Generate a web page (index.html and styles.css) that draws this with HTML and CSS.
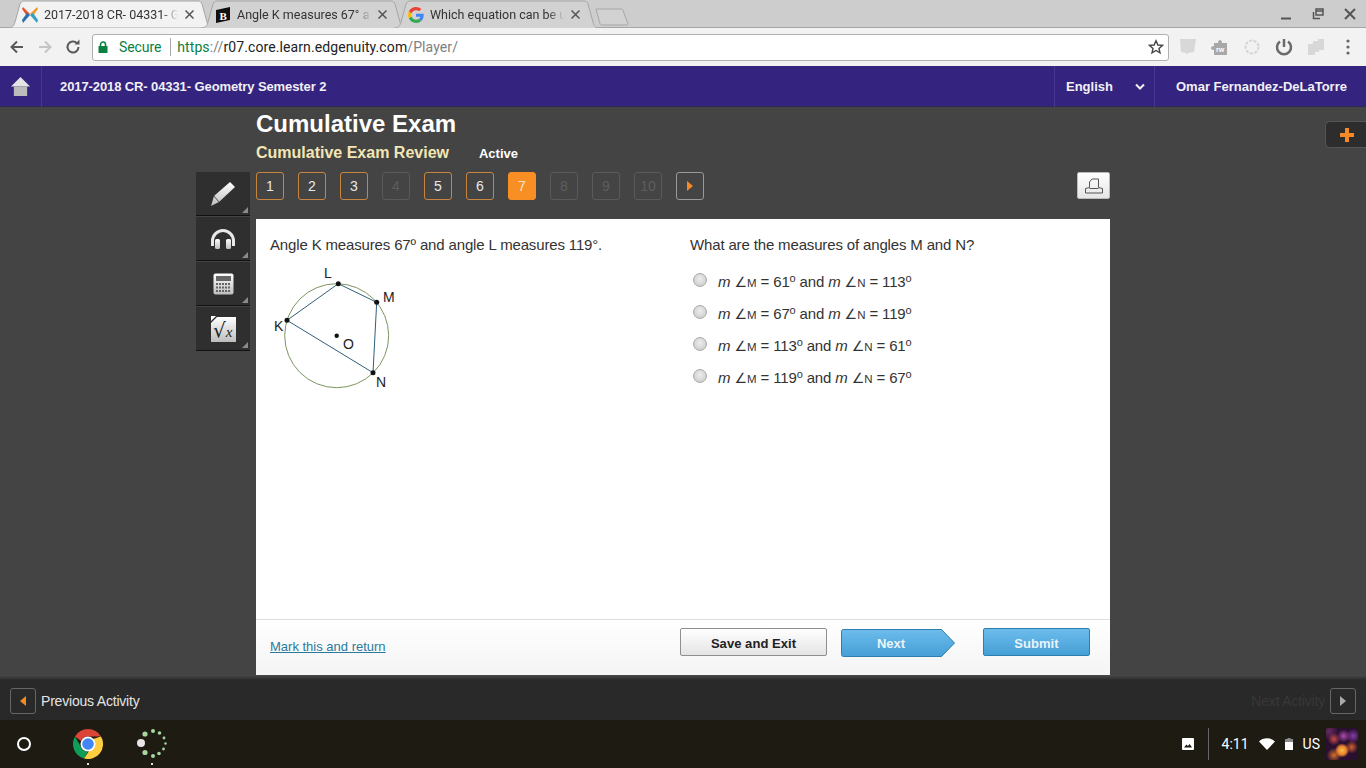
FILE: index.html
```html
<!DOCTYPE html>
<html lang="en">
<head>
<meta charset="utf-8">
<title>Cumulative Exam</title>
<link rel="stylesheet" href="styles.css">
</head>
<body>
<header class="tabstrip">
  <div class="tab tab-active">
    <svg class="tab-shape" width="204" height="28" viewBox="0 0 204 28"><path class="shape-active" d="M0 28 C4 28 6 26 7 22 L12 4 C13 2 14 1 16 1 L190 1 C192 1 193 2 194 4 L199 22 C200 26 202 28 204 28 Z"/></svg>
    <svg class="favicon" width="18" height="18" viewBox="0 0 18 18"><path d="M2 1 L9 8 L6 10 L1 3 Z" fill="#e2552a"/><path d="M16 1 L9 8 L12 10 L17 3 Z" fill="#f09a2d"/><path d="M2 17 L9 9 L6 7 L1 14 Z" fill="#2a6fb0"/><path d="M16 17 L9 9 L12 7 L17 14 Z" fill="#35a0c4"/></svg>
    <span class="tab-title">2017-2018 CR- 04331- G</span>
    <svg class="tab-close" width="9" height="9" viewBox="0 0 9 9"><path d="M0.500 0.500 L8.500 8.500 M8.500 0.500 L0.500 8.500"/></svg>
  </div>
  <div class="tab">
    <svg class="tab-shape" width="204" height="28" viewBox="0 0 204 28"><path class="shape-idle" d="M0 28 C4 28 6 26 7 22 L12 4 C13 2 14 1 16 1 L190 1 C192 1 193 2 194 4 L199 22 C200 26 202 28 204 28"/></svg>
    <svg class="favicon favicon-b" width="16" height="16" viewBox="0 0 16 16"><path d="M1 3 L15 0 L15 13 L1 16 Z" fill="#111"/><text x="4.500" y="12.500" class="b-letter">B</text></svg>
    <span class="tab-title">Angle K measures 67° a</span>
    <svg class="tab-close" width="9" height="9" viewBox="0 0 9 9"><path d="M0.500 0.500 L8.500 8.500 M8.500 0.500 L0.500 8.500"/></svg>
  </div>
  <div class="tab">
    <svg class="tab-shape" width="204" height="28" viewBox="0 0 204 28"><path class="shape-idle" d="M0 28 C4 28 6 26 7 22 L12 4 C13 2 14 1 16 1 L190 1 C192 1 193 2 194 4 L199 22 C200 26 202 28 204 28"/></svg>
    <svg class="favicon favicon-g" width="16" height="16" viewBox="0 0 48 48"><path fill="#ea4335" d="M24 9.500c3.500 0 6.700 1.200 9.200 3.600l6.900-6.900C35.900 2.400 30.500 0 24 0 14.600 0 6.500 5.400 2.600 13.200l8 6.200C12.400 13.700 17.700 9.500 24 9.500z"/><path fill="#4285f4" d="M47 24.500c0-1.600-.1-3.100-.4-4.500H24v9h12.900c-.6 3-2.300 5.500-4.800 7.200l7.700 6c4.500-4.200 7.200-10.300 7.200-17.700z"/><path fill="#fbbc05" d="M10.600 28.600C10.100 27.100 9.800 25.600 9.800 24s.3-3.100.8-4.600l-8-6.200C.9 16.500 0 20.100 0 24s.9 7.500 2.600 10.800l8-6.200z"/><path fill="#34a853" d="M24 48c6.500 0 11.900-2.100 15.900-5.800l-7.700-6c-2.200 1.500-4.900 2.300-8.200 2.300-6.300 0-11.600-4.200-13.400-9.900l-8 6.200C6.500 42.600 14.600 48 24 48z"/></svg>
    <span class="tab-title">Which equation can be u</span>
    <svg class="tab-close" width="9" height="9" viewBox="0 0 9 9"><path d="M0.500 0.500 L8.500 8.500 M8.500 0.500 L0.500 8.500"/></svg>
  </div>
  <svg class="newtab" width="34" height="18" viewBox="0 0 34 18"><path d="M1 1 L26 1 C27 1 27.500 1.500 28 2.500 L33 16 C33 17 32 17 31 17 L7 17 C6 17 5.500 16.500 5 15.500 Z"/></svg>
  <div class="winctl">
    <svg width="14" height="14" viewBox="0 0 14 14"><path class="win-stroke" d="M2 11.500 H12"/></svg>
    <svg width="14" height="14" viewBox="0 0 14 14"><path class="win-thin" d="M5 2 H12 V8 H5 Z M5 4 H12 M2.500 5 V11.500 H9"/></svg>
    <svg width="14" height="14" viewBox="0 0 14 14"><path class="win-stroke" d="M2 2 L12 12 M12 2 L2 12"/></svg>
  </div>
</header>

<nav class="toolbar">
  <svg class="tb-icon" width="16" height="16" viewBox="0 0 16 16"><path class="ic-dark" d="M14 8 H3 M8 2.500 L2.500 8 L8 13.500"/></svg>
  <svg class="tb-icon" width="16" height="16" viewBox="0 0 16 16"><path class="ic-faint" d="M2 8 H13 M8 2.500 L13.500 8 L8 13.500"/></svg>
  <svg class="tb-icon" width="16" height="16" viewBox="0 0 16 16"><path class="ic-dark" d="M13.500 8 A5.500 5.500 0 1 1 11.800 4"/><path class="ic-fill" d="M9.500 5.500 H14.500 V0.500 Z"/></svg>
  <div class="omnibox">
    <svg class="lock" width="10" height="12" viewBox="0 0 10 12"><path class="lock-body" d="M0.500 5 H9.500 V12 H0.500 Z"/><path class="lock-arc" d="M2.500 5 V3.500 A2.500 2.500 0 0 1 7.500 3.500 V5"/></svg>
    <span class="secure">Secure</span>
    <span class="omni-sep"></span>
    <span class="url"><span class="url-https">https</span><span class="url-dim">://</span>r07.core.learn.edgenuity.com<span class="url-dim">/Player/</span></span>
    <svg class="star" width="16" height="16" viewBox="0 0 16 16"><path d="M8 1.800 L9.900 6 L14.400 6.400 L11 9.400 L12 13.900 L8 11.500 L4 13.900 L5 9.400 L1.600 6.400 L6.100 6 Z"/></svg>
  </div>
  <div class="extensions">
    <svg width="18" height="18" viewBox="0 0 18 18"><path class="ext-pale" d="M1 1 H17 L15 14 L9 15 L8 17 L7 15 L2 14 Z"/></svg>
    <svg width="18" height="18" viewBox="0 0 18 18"><path class="ext-mid" d="M3 5 H7 C7 1 11 1 11 5 H16 V17 H3 V12 C-1 12 -1 8 3 8 Z"/><text x="5" y="14" class="ext-rw">rw</text></svg>
    <svg width="18" height="18" viewBox="0 0 18 18"><circle class="ext-ring" cx="9" cy="9" r="6.500"/></svg>
    <svg width="18" height="18" viewBox="0 0 18 18"><path class="ext-power" d="M5 3.500 A7 7 0 1 0 13 3.500 M9 1 V9"/></svg>
    <svg width="18" height="18" viewBox="0 0 18 18"><path class="ext-pale" d="M1 6 H8 V17 H1 Z M6 3 H12 V14 H6 Z M11 1 H17 V12 H11 Z"/></svg>
    <svg width="18" height="18" viewBox="0 0 18 18"><circle class="ext-dot" cx="9" cy="3" r="1.600"/><circle class="ext-dot" cx="9" cy="9" r="1.600"/><circle class="ext-dot" cx="9" cy="15" r="1.600"/></svg>
  </div>
</nav>

<section class="coursebar">
  <div class="home-cell">
    <svg width="19" height="19" viewBox="0 0 20 20"><path class="home-top" d="M10 0 L20 10 H0 Z"/><path class="home-body" d="M3 10 H17 V20 H3 Z"/></svg>
  </div>
  <div class="course-title">2017-2018 CR- 04331- Geometry Semester 2</div>
  <div class="lang-cell"><span>English</span><svg width="10" height="8" viewBox="0 0 10 8"><path d="M1 1.500 L5 5.500 L9 1.500"/></svg></div>
  <div class="user-cell">Omar Fernandez-DeLaTorre</div>
</section>

<main class="stage">
  <div class="plus-tab">
    <svg width="14" height="14" viewBox="0 0 14 14"><path d="M5 0 H9 V5 H14 V9 H9 V14 H5 V9 H0 V5 H5 Z"/></svg>
  </div>
  <div class="heading">
    <h1>Cumulative Exam</h1>
    <div class="subhead"><h2>Cumulative Exam Review</h2><span class="status">Active</span></div>
  </div>
  <aside class="tools">
    <div class="tool">
      <svg width="26" height="24" viewBox="0 0 26 24"><defs><linearGradient id="gr1" x1="0" y1="0" x2="0" y2="1"><stop offset="0" stop-color="#ffffff"/><stop offset="1" stop-color="#bdbdbd"/></linearGradient></defs><path fill="url(#gr1)" d="M20 0 L25 5 L9 20 L1 24 L4 14 Z"/><path class="tool-cut" d="M4 14 L9 20"/></svg>
    </div>
    <div class="tool">
      <svg width="26" height="20" viewBox="0 0 26 20"><path class="phones" d="M2.500 17 V12 A10.500 10.500 0 0 1 23.500 12 V17"/><rect x="5" y="10" width="5" height="10" rx="1.500" fill="url(#gr1)"/><rect x="16" y="10" width="5" height="10" rx="1.500" fill="url(#gr1)"/></svg>
    </div>
    <div class="tool">
      <svg width="21" height="22" viewBox="0 0 21 22"><rect x="0.500" y="0.500" width="20" height="21" rx="2" fill="url(#gr1)"/><rect class="calc-key" x="3" y="3" width="15" height="5"/><path class="calc-grid" d="M3 11 H18 M3 14.500 H18 M3 18 H18"/></svg>
    </div>
    <div class="tool">
      <svg width="26" height="26" viewBox="0 0 26 26"><path fill="url(#gr1)" d="M7 1 H26 V26 H1 V7 Z"/><path class="calc-fold" d="M1 0 H6 L1 5 Z"/><text x="3" y="21" class="sqrt">√<tspan class="sqrt-x">x</tspan></text></svg>
    </div>
  </aside>
  <div class="work">
    <div class="nav-row">
      <a class="qbtn">1</a><a class="qbtn">2</a><a class="qbtn">3</a><a class="qbtn off">4</a><a class="qbtn">5</a><a class="qbtn">6</a><a class="qbtn current">7</a><a class="qbtn off">8</a><a class="qbtn off">9</a><a class="qbtn off">10</a>
      <a class="qbtn arrow"><svg width="8" height="10" viewBox="0 0 8 10"><path d="M1 0 L7 5 L1 10 Z"/></svg></a>
      <button class="print" type="button"><svg width="20" height="16" viewBox="0 0 20 16"><path d="M1.500 15 V10.500 L5.500 9.500 V4 L8 1 H14.500 V9.500 L18.500 10.500 V15 Z M5.500 10.500 H14.500"/></svg></button>
    </div>
    <article class="panel">
      <div class="question">
        <div class="q-left">
          <p>Angle K measures 67º and angle L measures 119°.</p>
          <svg class="figure" width="130" height="130" viewBox="270 262 130 130">
            <circle class="fig-circle" cx="336.700" cy="335.700" r="52"/>
            <path class="fig-line" d="M287 320.300 L338.300 283.700 L376.700 302.300 L373 372.700 Z"/>
            <circle class="fig-dot" cx="287" cy="320.300" r="2.500"/>
            <circle class="fig-dot" cx="338.300" cy="283.700" r="2.500"/>
            <circle class="fig-dot" cx="376.700" cy="302.300" r="2.500"/>
            <circle class="fig-dot" cx="373" cy="372.700" r="2.500"/>
            <circle class="fig-dot" cx="336.700" cy="335.700" r="2.200"/>
            <text class="fig-label" x="324" y="278">L</text>
            <text class="fig-label" x="383" y="302">M</text>
            <text class="fig-label" x="274" y="331">K</text>
            <text class="fig-label" x="343" y="349">O</text>
            <text class="fig-label" x="376" y="387">N</text>
          </svg>
        </div>
        <div class="q-right">
          <p>What are the measures of angles M and N?</p>
          <ul class="options">
            <li><input type="radio" name="a"><span><i>m</i> <span class="ang">∠</span><span class="ang-l">M</span> = 61<sup>o</sup> and <i>m</i> <span class="ang">∠</span><span class="ang-l">N</span> = 113<sup>o</sup></span></li>
            <li><input type="radio" name="a"><span><i>m</i> <span class="ang">∠</span><span class="ang-l">M</span> = 67<sup>o</sup> and <i>m</i> <span class="ang">∠</span><span class="ang-l">N</span> = 119<sup>o</sup></span></li>
            <li><input type="radio" name="a"><span><i>m</i> <span class="ang">∠</span><span class="ang-l">M</span> = 113<sup>o</sup> and <i>m</i> <span class="ang">∠</span><span class="ang-l">N</span> = 61<sup>o</sup></span></li>
            <li><input type="radio" name="a"><span><i>m</i> <span class="ang">∠</span><span class="ang-l">M</span> = 119<sup>o</sup> and <i>m</i> <span class="ang">∠</span><span class="ang-l">N</span> = 67<sup>o</sup></span></li>
          </ul>
        </div>
      </div>
      <footer class="panel-foot">
        <a class="mark" href="#">Mark this and return</a>
        <button class="btn btn-save" type="button">Save and Exit</button>
        <div class="btn-next">
          <svg width="114" height="28" viewBox="0 0 114 28"><defs><linearGradient id="gb" x1="0" y1="0" x2="0" y2="1"><stop offset="0" stop-color="#6dbcec"/><stop offset="1" stop-color="#459fd6"/></linearGradient></defs><path fill="url(#gb)" d="M2.500 0.500 H100.500 L113.500 14 L100.500 27.500 H2.500 Q0.500 27.500 0.500 25.500 V2.500 Q0.500 0.500 2.500 0.500 Z"/></svg>
          <span>Next</span>
        </div>
        <button class="btn btn-submit" type="button">Submit</button>
      </footer>
    </article>
  </div>
</main>

<section class="activitybar">
  <a class="act-btn"><svg width="8" height="10" viewBox="0 0 8 10"><path class="act-prev" d="M7 0 L1 5 L7 10 Z"/></svg></a>
  <span class="act-prev-text">Previous Activity</span>
  <span class="act-next-text">Next Activity</span>
  <a class="act-btn"><svg width="8" height="10" viewBox="0 0 8 10"><path class="act-next" d="M1 0 L7 5 L1 10 Z"/></svg></a>
</section>

<footer class="shelf">
  <div class="shelf-item"><span class="launcher"></span></div>
  <div class="shelf-item running">
    <svg width="30" height="30" viewBox="0 0 30 30"><path fill="#db4437" d="M15 0 A15 15 0 0 1 28 7.500 H15 A7.500 7.500 0 0 0 8 12 L2 7.500 A15 15 0 0 1 15 0 Z"/><path fill="#0f9d58" d="M2 7.500 L8 18 A7.500 7.500 0 0 0 15 22.500 L11 29.500 A15 15 0 0 1 2 7.500 Z"/><path fill="#ffcd40" d="M28 7.500 A15 15 0 0 1 11 29.500 L18 19 A7.500 7.500 0 0 0 20 10 Z"/><circle cx="15" cy="15" r="7.500" fill="#fff"/><circle cx="15" cy="15" r="5.800" fill="#4285f4"/></svg>
  </div>
  <div class="shelf-item running">
    <svg width="32" height="30" viewBox="0 0 32 30"><circle class="sp-white" cx="5" cy="14" r="4"/><circle class="sp-green" cx="9" cy="5" r="2.600"/><circle class="sp-green" cx="17" cy="2" r="2"/><circle class="sp-green" cx="23.500" cy="4" r="1.800"/><circle class="sp-green" cx="28" cy="9" r="1.400"/><circle class="sp-green" cx="29.500" cy="14.500" r="1.200"/><circle class="sp-green" cx="27.500" cy="20" r="1.400"/><circle class="sp-green" cx="23" cy="24.500" r="1.800"/><circle class="sp-green" cx="17" cy="27" r="2"/><circle class="sp-green" cx="9" cy="23.500" r="2.600"/></svg>
  </div>
  <div class="status-tray">
    <svg class="tray-img" width="12" height="12" viewBox="0 0 12 12"><path class="tray-white" fill-rule="evenodd" d="M1 0 H11 Q12 0 12 1 V11 Q12 12 11 12 H1 Q0 12 0 11 V1 Q0 0 1 0 Z M2 9.500 H10 L7.700 6 L6 8 L4.500 6.500 Z"/></svg>
    <span class="tray-sep"></span>
    <span class="tray-time">4:11</span>
    <svg class="tray-wifi" width="16" height="12" viewBox="0 0 16 12"><path class="tray-white" d="M0 3.500 C4 -0.800 12 -0.800 16 3.500 L8 12 Z"/></svg>
    <svg class="tray-batt" width="8" height="12" viewBox="0 0 8 12"><path class="tray-dim" d="M2.500 0 H5.500 V1 H8 V4 H0 V1 H2.500 Z"/><path class="tray-white" d="M0 4 H8 V12 H0 Z"/></svg>
    <span class="tray-lang">US</span>
    <span class="avatar"></span>
  </div>
</footer>
</body>
</html>
```
FILE: styles.css
```css
* { box-sizing: border-box; }
html, body { margin: 0; padding: 0; }
body {
  width: 1366px;
  height: 768px;
  overflow: hidden;
  display: flex;
  flex-direction: column;
  font-family: "Liberation Sans", Arial, sans-serif;
  background: #444;
}
svg { display: block; flex: none; }

/* Tab strip */
.tabstrip {
  height: 28px;
  flex: none;
  display: flex;
  padding-left: 8px;
  background: #cdcdcd;
  border-bottom: 1px solid #a6a6a6;
  font-family: Roboto, sans-serif;
  position: relative;
}
.tab {
  position: relative;
  width: 193px;
  height: 28px;
  flex: none;
  display: flex;
  align-items: center;
  padding: 1px 0 0 13px;
  color: #333;
  font-size: 12.500px;
}
.tab-shape { position: absolute; left: 0; top: 0; }
.shape-active { fill: #f2f2f2; stroke: #a6a6a6; }
.shape-idle { fill: #d2d2d2; stroke: #a6a6a6; }
.favicon { position: relative; width: 18px; margin-right: 5px; }
.favicon-b { width: 16px; margin-right: 6px; margin-left: 1px; }
.favicon-g { width: 16px; margin-right: 6px; margin-left: 1px; }
.b-letter { font: bold 11px "Liberation Serif", serif; fill: #fff; }
.tab-title {
  position: relative;
  width: 134px;
  white-space: nowrap;
  -webkit-mask-image: linear-gradient(to right, #000 88%, transparent);
  mask-image: linear-gradient(to right, #000 88%, transparent);
}
.tab-close { position: relative; margin-left: 7px; }
.tab-close path { fill: none; stroke: #555; stroke-width: 1.500; }
.newtab { margin: 8px 0 0 8px; }
.newtab path { fill: #d2d2d2; stroke: #a6a6a6; }
.winctl {
  margin-left: auto;
  display: flex;
  gap: 18px;
  padding: 7px 9px 0 0;
}
.win-stroke { fill: none; stroke: #555; stroke-width: 2; }
.win-thin { fill: none; stroke: #555; stroke-width: 1.500; }

/* Toolbar */
.toolbar {
  height: 38px;
  flex: none;
  display: flex;
  align-items: center;
  padding-left: 9px;
  gap: 12px;
  background: #f2f2f2;
}
.ic-dark { fill: none; stroke: #5a5a5a; stroke-width: 2; }
.ic-faint { fill: none; stroke: #c4c4c4; stroke-width: 2; }
.ic-fill { fill: #5a5a5a; }
.omnibox {
  width: 1077px;
  height: 27px;
  margin-left: -1px;
  display: flex;
  align-items: center;
  padding: 0 4px 0 5px;
  background: #fff;
  border: 1px solid #b0b0b0;
  border-radius: 3px;
  font-family: Roboto, sans-serif;
  font-size: 14px;
}
.lock { margin-right: 11px; }
.lock-body { fill: #0b8043; }
.lock-arc { fill: none; stroke: #0b8043; stroke-width: 1.500; }
.secure { color: #0b8043; letter-spacing: -0.100px; }
.omni-sep { width: 1px; height: 18px; background: #aaa; margin: 0 6px 0 9px; }
.url { color: #222; letter-spacing: 0.100px; }
.url-https { color: #0b8043; }
.url-dim { color: #808080; }
.star { margin-left: auto; }
.star path { fill: none; stroke: #444; stroke-width: 1.400; }
.extensions {
  display: flex;
  gap: 14px;
  margin-left: -2px;
}
.ext-pale { fill: #d8d8d8; }
.ext-mid { fill: #a8a8a8; }
.ext-rw { font: bold 7px "Liberation Sans", sans-serif; fill: #fff; }
.ext-ring { fill: none; stroke: #d4d4d4; stroke-width: 2; stroke-dasharray: 3 1.500; }
.ext-power { fill: none; stroke: #6a6a6a; stroke-width: 2.500; }
.ext-dot { fill: #666; }

/* Course bar */
.coursebar {
  height: 41px;
  flex: none;
  display: flex;
  align-items: stretch;
  background: #35247f;
  color: #f0f0f5;
  font-weight: bold;
  font-size: 13px;
  box-shadow: inset 0 -1px 0 #2b2a52;
}
.home-cell {
  width: 42px;
  display: flex;
  align-items: center;
  justify-content: center;
  border-right: 1px solid #46378f;
}
.home-top { fill: #e4e4e4; }
.home-body { fill: #bcbcbc; }
.course-title { flex: 1; padding-left: 18px; align-self: center; letter-spacing: -0.100px; }
.lang-cell {
  width: 101px;
  display: flex;
  align-items: center;
  justify-content: space-between;
  padding: 0 9px 0 11px;
  border-left: 1px solid #46378f;
  border-right: 1px solid #46378f;
}
.lang-cell svg path { fill: none; stroke: #f0f0f5; stroke-width: 2; }
.user-cell { width: 211px; padding-left: 21px; align-self: center; white-space: nowrap; }

/* Main stage */
.stage {
  flex: 1;
  position: relative;
  display: grid;
  grid-template-columns: 54px 854px;
  grid-template-rows: 65px 1fr;
  column-gap: 6px;
  padding-left: 196px;
  background: #444;
  min-height: 0;
}
.plus-tab {
  position: absolute;
  right: 0;
  top: 14px;
  width: 41px;
  height: 27px;
  display: flex;
  align-items: center;
  justify-content: center;
  padding-left: 2px;
  background: #2d2d2d;
  border: 1px solid #555;
  border-right: 0;
  border-radius: 5px 0 0 5px;
}
.plus-tab path { fill: #f58a25; }
.heading { grid-column: 2; grid-row: 1; }
h1 {
  margin: 4px 0 0;
  font-size: 24px;
  line-height: 26px;
  color: #fff;
  font-weight: bold;
}
.subhead { display: flex; align-items: baseline; margin-top: 7px; }
h2 {
  margin: 0;
  font-size: 16px;
  line-height: 18px;
  font-weight: bold;
  color: #f3e6b4;
}
.status { margin-left: 30px; font-size: 13px; font-weight: bold; color: #fff; }

/* Tool rail */
.tools { grid-column: 1; grid-row: 2; display: flex; flex-direction: column; gap: 1px; }
.tool {
  position: relative;
  height: 44px;
  display: flex;
  align-items: center;
  justify-content: center;
  background: #2f2f2f;
  border-bottom: 1px solid #111;
}
.tool::after {
  content: "";
  position: absolute;
  right: 2px;
  bottom: 2px;
  border-style: solid;
  border-width: 0 0 6px 6px;
  border-color: transparent transparent #8a8a8a transparent;
}
.tool-cut { stroke: #555; fill: none; }
.phones { fill: none; stroke: #e8e8e8; stroke-width: 3; }
.calc-key { fill: #666; }
.calc-grid { fill: none; stroke: #666; stroke-width: 2; stroke-dasharray: 2 1; }
.calc-fold { fill: #fff; }
.sqrt { font: 20px "DejaVu Sans", sans-serif; fill: #222; }
.sqrt-x { font: italic 15px "Liberation Serif", serif; }

/* Work column */
.work { grid-column: 2; grid-row: 2; display: flex; flex-direction: column; min-height: 0; }
.nav-row { display: flex; gap: 14px; height: 28px; flex: none; }
.qbtn {
  width: 28px;
  height: 28px;
  display: flex;
  align-items: center;
  justify-content: center;
  font-size: 14px;
  color: #e8e8e8;
  border: 1px solid #c7853f;
  border-radius: 3px;
}
.qbtn.off { color: #5e5e5e; border-color: #5a5a5a; }
.qbtn.current { color: #f6e3cd; background: #f78f25; border-color: #f78f25; }
.qbtn.arrow { border-color: #999; }
.qbtn.arrow path { fill: #f58a25; }
.print {
  margin-left: auto;
  width: 33px;
  height: 27px;
  padding: 0;
  display: flex;
  align-items: center;
  justify-content: center;
  background: linear-gradient(#ffffff, #e6e6e6);
  border: 1px solid #bbb;
  border-radius: 2px;
}
.print path { fill: none; stroke: #555; }

/* Panel */
.panel {
  margin-top: 19px;
  flex: 1;
  min-height: 0;
  display: flex;
  flex-direction: column;
  background: #fff;
}
.question { flex: 1; display: grid; grid-template-columns: 420px 1fr; padding: 17px 14px 0; color: #333; font-size: 15px; letter-spacing: -0.150px; }
.question p { margin: 0; line-height: 18px; }
.figure { margin-top: 8px; }
.fig-circle { fill: none; stroke: #7c9660; stroke-width: 1; }
.fig-line { fill: none; stroke: #2f5f7a; stroke-width: 1; }
.fig-dot { fill: #111; }
.fig-label { font-size: 14px; fill: #222; letter-spacing: 0; }
.options { list-style: none; margin: 11px 0 0; padding: 0; }
.options li { height: 32px; display: flex; align-items: center; }
.options input {
  appearance: none;
  -webkit-appearance: none;
  width: 14px;
  height: 14px;
  margin: -2px 11px 0 3px;
  border: 1px solid #aaa;
  border-radius: 50%;
  background: radial-gradient(circle at 50% 40%, #eee, #c4c4c4);
  flex: none;
}
.options i { font-family: "Liberation Sans", sans-serif; }
.ang { font-family: "DejaVu Sans", sans-serif; font-size: 14px; letter-spacing: 0; }
.ang-l { font-size: 11.500px; letter-spacing: 0; }
.options sup { font-size: 11px; line-height: 0; vertical-align: 5px; }
.panel-foot {
  height: 56px;
  flex: none;
  display: flex;
  align-items: flex-start;
  padding: 8px 20px 0 14px;
  border-top: 1px solid #ddd;
  background: linear-gradient(#ffffff, #f4f4f4);
}
.mark { margin-top: 11px; font-size: 13px; color: #2a7a9e; }
.btn {
  height: 28px;
  padding: 2px 0 0;
  font: bold 13px "Liberation Sans", sans-serif;
  letter-spacing: 0.050px;
  border-radius: 2px;
}
.btn-save {
  width: 147px;
  margin-left: auto;
  color: #222;
  background: linear-gradient(#ffffff, #e4e4e4);
  border: 1px solid #8f8f8f;
}
.btn-next {
  position: relative;
  width: 114px;
  height: 28px;
  margin: 1px 0 0 14px;
  display: flex;
  align-items: center;
  justify-content: center;
  color: #e9f4fb;
  font-weight: bold;
  font-size: 13px;
}
.btn-next svg { position: absolute; left: 0; top: 0; }
.btn-next svg path { stroke: #2f7fae; }
.btn-next span { position: relative; margin-right: 14px; }
.btn-submit {
  width: 107px;
  margin-left: 28px;
  color: #e9f4fb;
  background: linear-gradient(#6dbcec, #459fd6);
  border: 1px solid #2f7fae;
}

/* Activity bar */
.activitybar {
  height: 45px;
  flex: none;
  display: flex;
  align-items: center;
  padding: 6px 10px 0;
  background: linear-gradient(#4a4a4a 0, #2a2a2a 5px, #282828 100%);
  font-size: 14px;
  letter-spacing: -0.200px;
}
.act-btn {
  width: 26px;
  height: 26px;
  display: flex;
  align-items: center;
  justify-content: center;
  border: 1px solid #666;
  border-radius: 3px;
}
.act-prev { fill: #f58a25; }
.act-next { fill: #aaa; }
.act-prev-text { margin-left: 5px; color: #e4e4e4; }
.act-next-text { margin-left: auto; margin-right: 5px; color: #383838; }

/* Shelf */
.shelf {
  height: 48px;
  flex: none;
  display: flex;
  align-items: center;
  gap: 16px;
  background: #1e1b13;
  font-family: Roboto, sans-serif;
  font-size: 14px;
  color: #fff;
}
.shelf-item {
  position: relative;
  width: 48px;
  height: 48px;
  display: flex;
  align-items: center;
  justify-content: center;
}
.running::after {
  content: "";
  position: absolute;
  left: 23px;
  bottom: 3px;
  width: 2px;
  height: 2px;
  background: #ddd;
}
.launcher {
  width: 14px;
  height: 14px;
  border: 2px solid #fff;
  border-radius: 50%;
}
.sp-white { fill: #e6e6e6; }
.sp-green { fill: #a7d6a0; }
.status-tray { margin-left: auto; display: flex; align-items: center; padding-right: 8px; }
.tray-white { fill: #fff; }
.tray-dim { fill: #8a8a8a; }
.tray-sep { width: 1px; height: 32px; background: #666; margin: 0 13px 0 14px; }
.tray-time { margin-right: 10px; font-size: 14px; }
.tray-lang { margin: 0 6px 0 10px; }
.tray-wifi { margin-right: 10px; }
.avatar {
  width: 32px;
  height: 32px;
  border-radius: 2px;
  background:
    radial-gradient(circle at 50% 70%, #f6c24a 0, #e8802c 16%, transparent 26%),
    radial-gradient(circle at 25% 85%, #d8702a 0, transparent 20%),
    radial-gradient(circle at 80% 60%, #d8602c 0, transparent 20%),
    radial-gradient(circle at 25% 35%, #c84a4a 0, transparent 20%),
    radial-gradient(circle at 55% 25%, #b04ab0 0, transparent 22%),
    radial-gradient(circle at 85% 25%, #8a3aa8 0, transparent 20%),
    radial-gradient(circle at 10% 10%, #6a2a60 0, transparent 22%),
    #2a1030;
}
```
